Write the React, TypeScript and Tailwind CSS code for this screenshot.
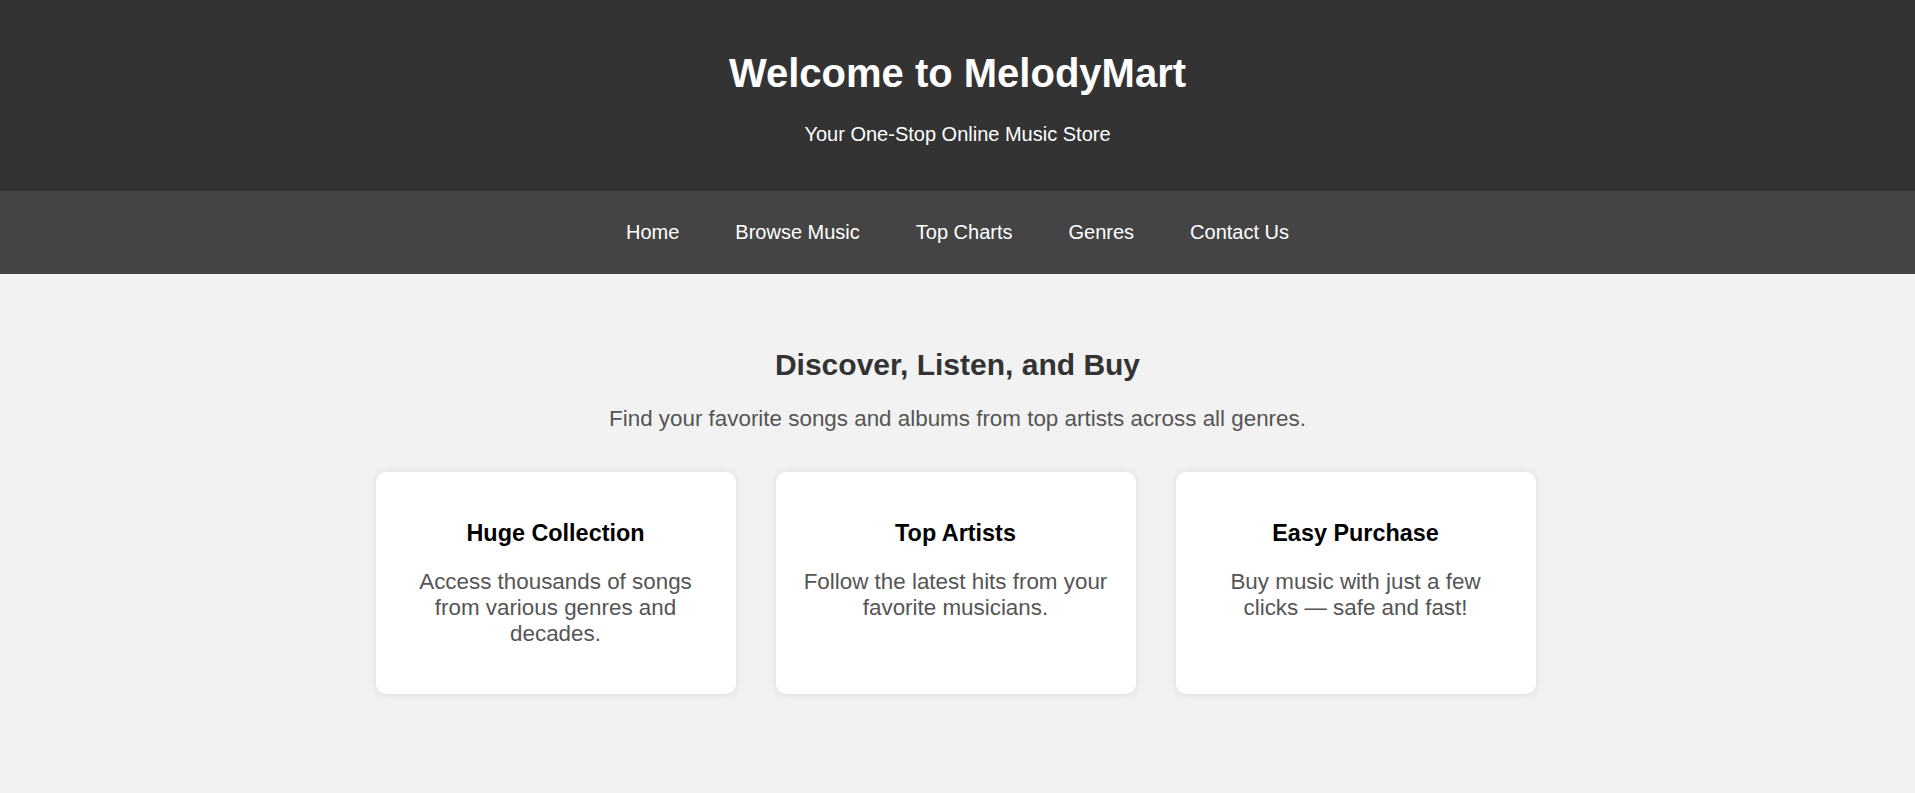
import React from "react";

const navLinks = ["Home", "Browse Music", "Top Charts", "Genres", "Contact Us"];

const features = [
  {
    title: "Huge Collection",
    text: "Access thousands of songs from various genres and decades.",
  },
  {
    title: "Top Artists",
    text: "Follow the latest hits from your favorite musicians.",
  },
  {
    title: "Easy Purchase",
    text: "Buy music with just a few clicks — safe and fast!",
  },
];

const App: React.FC = () => {
  return (
    <div className="min-h-screen w-full flex flex-col bg-[#f2f2f2] font-['Liberation_Sans',Arial,sans-serif]">
      {/* Header */}
      <header className="bg-[#333333] text-white text-center pt-[51px] pb-[45px]">
        <h1 className="text-[40px] font-bold leading-[normal]">
          Welcome to MelodyMart
        </h1>
        <p className="mt-[27px] text-[20px] leading-[normal]">
          Your One-Stop Online Music Store
        </p>
      </header>

      {/* Nav */}
      <nav className="bg-[#444444] h-[83px] flex items-center justify-center gap-[56px]">
        {navLinks.map((link) => (
          <a
            key={link}
            href="#"
            className="text-white text-[20px] leading-[normal] no-underline"
          >
            {link}
          </a>
        ))}
      </nav>

      {/* Main */}
      <main className="flex-1 flex flex-col items-center pt-[74px] pb-[60px] text-center">
        <h2 className="text-[30px] font-bold leading-[normal] text-[#333333]">
          Discover, Listen, and Buy
        </h2>
        <p className="mt-[24px] text-[22.4px] leading-[normal] text-[#555555]">
          Find your favorite songs and albums from top artists across all
          genres.
        </p>
        <div className="mt-[40px] pr-[4px] flex justify-center gap-[40px]">
          {features.map((f) => (
            <div
              key={f.title}
              className="w-[360px] bg-white rounded-[10px] shadow-[0_0_10px_rgba(0,0,0,0.1)] px-[25px] pt-[48px] pb-[47px]"
            >
              <h3 className="text-[23.4px] font-bold leading-[normal] text-black">
                {f.title}
              </h3>
              <p className="mt-[22px] text-[22.4px] leading-[normal] text-[#555555]">
                {f.text}
              </p>
            </div>
          ))}
        </div>
      </main>
    </div>
  );
};

export default App;
